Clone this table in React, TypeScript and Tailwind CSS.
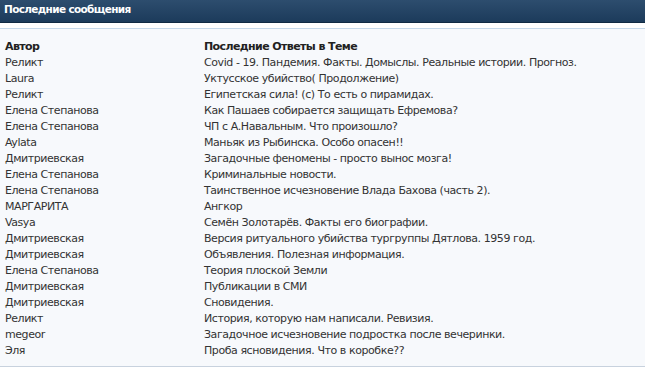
const rows: [string, string][] = [
  ["Реликт", "Covid - 19. Пандемия. Факты. Домыслы. Реальные истории. Прогноз."],
  ["Laura", "Уктусское убийство( Продолжение)"],
  ["Реликт", "Египетская сила! (с) То есть о пирамидах."],
  ["Елена Степанова", "Как Пашаев собирается защищать Ефремова?"],
  ["Елена Степанова", "ЧП с А.Навальным. Что произошло?"],
  ["Aylata", "Маньяк из Рыбинска. Особо опасен!!"],
  ["Дмитриевская", "Загадочные феномены - просто вынос мозга!"],
  ["Елена Степанова", "Криминальные новости."],
  ["Елена Степанова", "Таинственное исчезновение Влада Бахова (часть 2)."],
  ["МАРГАРИТА", "Ангкор"],
  ["Vasya", "Семён Золотарёв. Факты его биографии."],
  ["Дмитриевская", "Версия ритуального убийства тургруппы Дятлова. 1959 год."],
  ["Дмитриевская", "Объявления. Полезная информация."],
  ["Елена Степанова", "Теория плоской Земли"],
  ["Дмитриевская", "Публикации в СМИ"],
  ["Дмитриевская", "Сновидения."],
  ["Реликт", "История, которую нам написали. Ревизия."],
  ["megeor", "Загадочное исчезновение подростка после вечеринки."],
  ["Эля", "Проба ясновидения. Что в коробке??"],
];

export default function App() {
  return (
    <div className="h-[382px] w-[645px] bg-white font-['DejaVu_Sans',sans-serif] text-[11px] tracking-[-0.43px]">
      <div className="flex h-[23px] items-center border-b border-[#102a44] bg-gradient-to-b from-[#2d4d6e] to-[#1c3b5b] px-[4px] pb-[2px]">
        <span className="text-[10.5px] font-bold tracking-[-0.65px] text-white">Последние сообщения</span>
      </div>
      <div className="mt-[5px] border-y border-t-[#c5d8ea] border-b-[#c8d2de] bg-[#f7f9fc] pt-[10px] pb-[7px]">
        <div className="flex h-[16px] items-center font-bold tracking-[-0.6px] text-[#222]">
          <div className="w-[204px] pl-[5px]">Автор</div>
          <div>Последние Ответы в Теме</div>
        </div>
        {rows.map(([author, topic], i) => (
          <div key={i} className="flex h-[16px] items-center text-[#333]">
            <div className="w-[204px] pl-[5px]">{author}</div>
            <div>{topic}</div>
          </div>
        ))}
      </div>
    </div>
  );
}
